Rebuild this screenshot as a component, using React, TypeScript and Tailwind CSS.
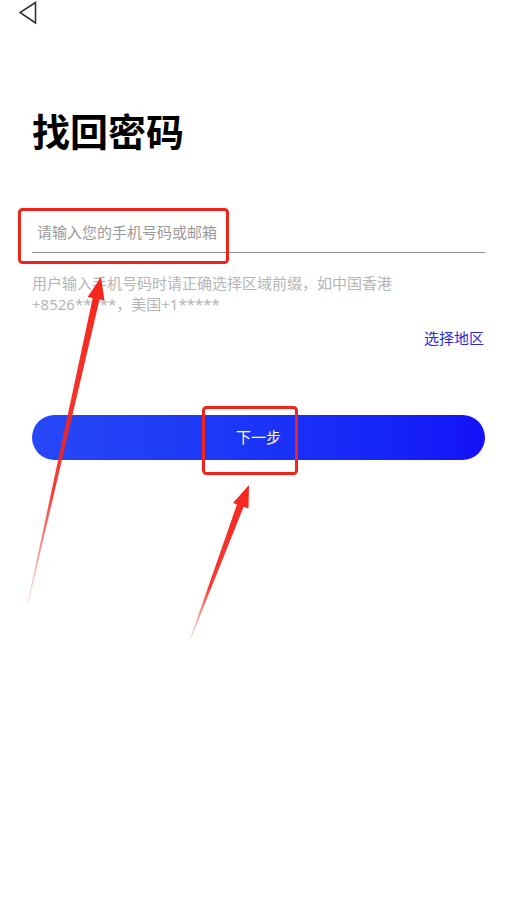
import React from 'react';

function BackIcon() {
  return (
    <svg width="20" height="26" viewBox="0 0 20 26" fill="none">
      <polygon points="16.5,1.5 1,11.5 16.5,22" stroke="#333333" strokeWidth="1.6" strokeLinejoin="miter" fill="none" />
    </svg>
  );
}

function Annotations() {
  return (
    <svg className="pointer-events-none absolute left-0 top-0" width="517" height="905" viewBox="0 0 517 905">
      <defs>
        <linearGradient id="fade1" x1="28" y1="603" x2="101" y2="283" gradientUnits="userSpaceOnUse">
          <stop offset="0" stopColor="#f5261c" stopOpacity="0.15" />
          <stop offset="0.35" stopColor="#f5261c" stopOpacity="0.9" />
          <stop offset="1" stopColor="#f5261c" />
        </linearGradient>
        <linearGradient id="fade2" x1="190" y1="640" x2="248" y2="485" gradientUnits="userSpaceOnUse">
          <stop offset="0" stopColor="#f5261c" stopOpacity="0.15" />
          <stop offset="0.35" stopColor="#f5261c" stopOpacity="0.9" />
          <stop offset="1" stopColor="#f5261c" />
        </linearGradient>
      </defs>
      <rect x="19.5" y="209.5" width="208" height="53" rx="3" fill="none" stroke="#f0241b" strokeWidth="3" />
      <rect x="203.5" y="407.5" width="93" height="66" rx="3" fill="none" stroke="#f0241b" strokeWidth="3" />
      <polygon
        points="101,277 104.5,300.5 99.5,299.5 28.4,603.1 27.6,602.9 92.7,298 87.6,297"
        fill="url(#fade1)"
      />
      <polygon
        points="249,485 248.5,508.4 243.6,506.8 190.4,640.1 189.6,639.9 237,504.4 233,503"
        fill="url(#fade2)"
      />
    </svg>
  );
}

export default function App() {
  return (
    <div className="relative min-h-[905px] w-[517px] overflow-hidden bg-white font-['Noto_Sans','Noto_Sans_CJK_SC',sans-serif]">
      <div className="h-[26px] pl-[19px] pt-[1px]">
        <BackIcon />
      </div>

      <div className="px-8">
        <h1 className="mt-[86px] text-[38px] font-bold leading-none text-black">找回密码</h1>

        <div className="mt-[59px] flex h-[44px] items-center border-b border-[#8e8e8e] pl-[5px] pt-[3px]">
          <span className="text-[15px] text-[#9a9a9a]">请输入您的手机号码或邮箱</span>
        </div>

        <p className="mt-[20px] text-[15px] leading-[21px] text-[#b5b5b5]">
          用户输入手机号码时请正确选择区域前缀，如中国香港
          <br />
          +8526*****，美国+1*****
        </p>

        <div className="mt-[13px] pr-[1px] text-right text-[15px] leading-[21px] text-[#2b2bd6]">选择地区</div>

        <button className="mt-[66px] flex h-[45px] w-full items-center justify-center rounded-full bg-gradient-to-r from-[#2748f6] to-[#1410f8] text-[15px] text-white">
          下一步
        </button>
      </div>

      <Annotations />
    </div>
  );
}
